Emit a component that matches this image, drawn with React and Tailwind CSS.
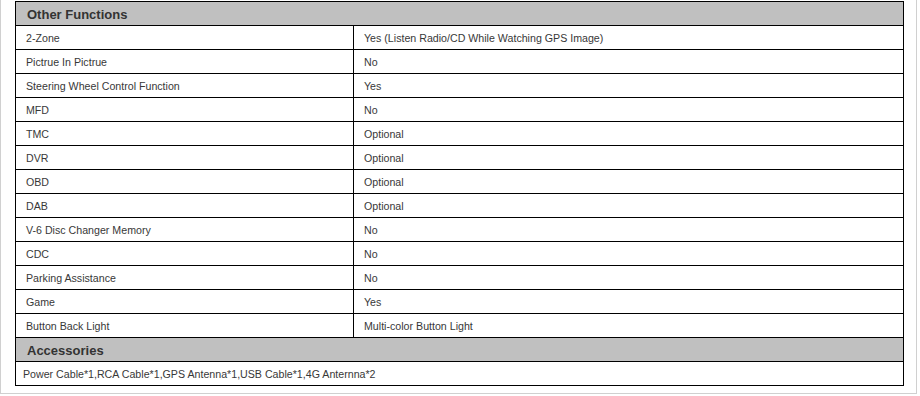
import React from 'react';

const rows = [
    ['2-Zone', 'Yes (Listen Radio/CD While Watching GPS Image)'],
    ['Pictrue In Pictrue', 'No'],
    ['Steering Wheel Control Function', 'Yes'],
    ['MFD', 'No'],
    ['TMC', 'Optional'],
    ['DVR', 'Optional'],
    ['OBD', 'Optional'],
    ['DAB', 'Optional'],
    ['V-6 Disc Changer Memory', 'No'],
    ['CDC', 'No'],
    ['Parking Assistance', 'No'],
    ['Game', 'Yes'],
    ['Button Back Light', 'Multi-color Button Light'],
];

const SectionHeader = ({ title }) => (
    <tr className="h-[24px] bg-[#c0c0c0]">
        <td colSpan={2} className="border border-black pl-[11px] pt-[2px] text-[13px] font-bold text-[#333] align-middle">
            {title}
        </td>
    </tr>
);

export default function App() {
    return (
        <div className="w-[917px] h-[394px] bg-white border-l border-r border-b border-[#d0d0d0] pl-[14px] pt-[1px] font-['Liberation_Sans',Arial,sans-serif]">
            <table className="w-[889px] border-collapse table-fixed text-[10.65px] text-[#383838]">
                <colgroup>
                    <col className="w-[338px]" />
                    <col />
                </colgroup>
                <tbody>
                    <SectionHeader title="Other Functions" />
                    {rows.map(([label, value]) => (
                        <tr key={label} className="h-[24px]">
                            <td className="border border-black pl-[10px] pt-[2px] align-middle">{label}</td>
                            <td className="border border-black pl-[10px] pt-[2px] align-middle">{value}</td>
                        </tr>
                    ))}
                    <SectionHeader title="Accessories" />
                    <tr className="h-[24px]">
                        <td colSpan={2} className="border border-black pl-[7px] pt-[2px] align-middle">
                            Power Cable*1,RCA Cable*1,GPS Antenna*1,USB Cable*1,4G Anternna*2
                        </td>
                    </tr>
                </tbody>
            </table>
        </div>
    );
}
